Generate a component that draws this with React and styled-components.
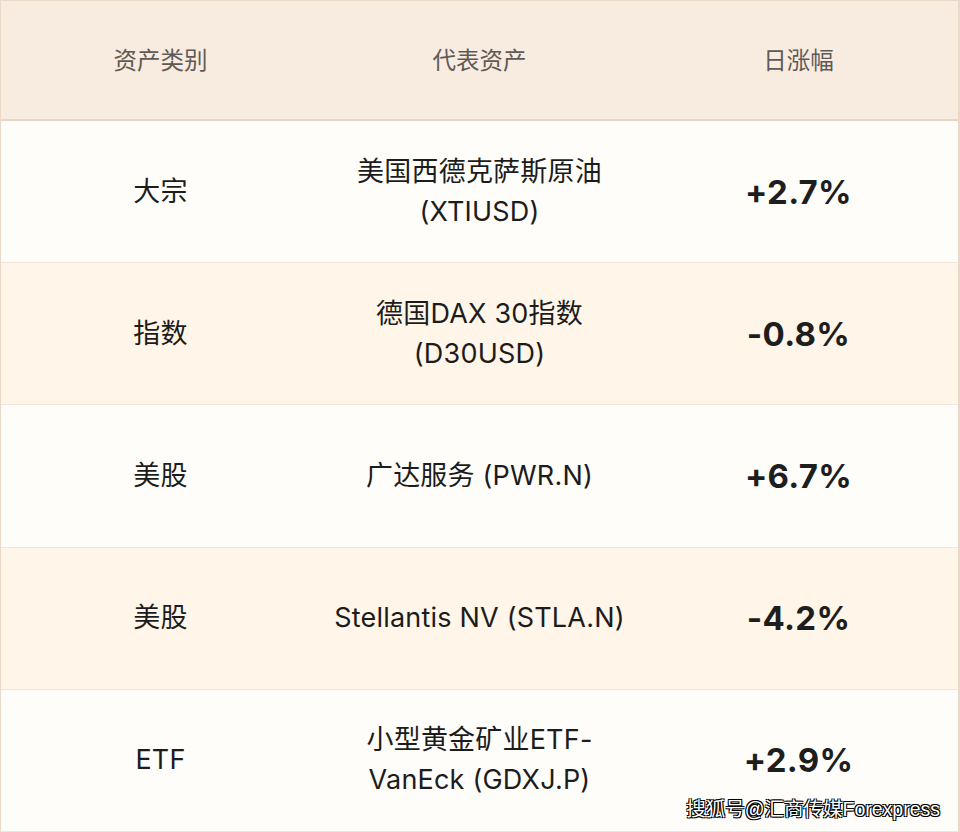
import React from "react";
import styled, { createGlobalStyle } from "styled-components";

const GlobalStyle = createGlobalStyle`
  html, body {
    margin: 0;
    padding: 0;
    background: #fffdfa;
  }
  body {
    font-family: "Inter", "Noto Sans CJK SC", sans-serif;
  }
`;

const Table = styled.div`
  position: relative;
  width: 960px;
  height: 832px;
  box-sizing: border-box;
  display: grid;
  grid-template-rows: 120px repeat(5, 1fr);
  border-left: 1px solid #ead9c8;
  border-right: 2px solid #ead9c8;
  border-top: 1px solid #ead9c8;
  overflow: hidden;
`;

const HeaderRow = styled.div`
  display: grid;
  grid-template-columns: repeat(3, 1fr);
  align-items: center;
  background: #f8ebdf;
  border-bottom: 2px solid #e8d5c3;
`;

const HeaderCell = styled.div`
  text-align: center;
  font-size: 23.5px;
  color: #5f5a57;
  padding-bottom: 2px;
`;

const Row = styled.div`
  display: grid;
  grid-template-columns: repeat(3, 1fr);
  align-items: center;
  background: ${(p) => (p.$alt ? "#fff5e9" : "#fffdfa")};
  border-bottom: 1px solid #f3e6d9;
`;

const Cell = styled.div`
  text-align: center;
  font-size: 27px;
  line-height: 40px;
  color: #1c1c1c;
  letter-spacing: 0.2px;
`;

const Change = styled.div`
  text-align: center;
  font-size: 33px;
  font-weight: 700;
  color: #1e1e1e;
  letter-spacing: 0.3px;
`;

const Watermark = styled.div`
  position: absolute;
  right: 18px;
  bottom: 10px;
  font-family: "Liberation Sans", "Noto Sans CJK SC", sans-serif;
  font-size: 19.5px;
  color: #fff;
  text-shadow: -1px -1px 0 #000, 1px -1px 0 #000, -1px 1px 0 #000,
    1px 1px 0 #000;
`;

const rows = [
  { type: "大宗", asset: ["美国西德克萨斯原油", "(XTIUSD)"], change: "+2.7%" },
  { type: "指数", asset: ["德国DAX 30指数", "(D30USD)"], change: "-0.8%" },
  { type: "美股", asset: ["广达服务 (PWR.N)"], change: "+6.7%" },
  { type: "美股", asset: ["Stellantis NV (STLA.N)"], change: "-4.2%" },
  { type: "ETF", asset: ["小型黄金矿业ETF-", "VanEck (GDXJ.P)"], change: "+2.9%" },
];

const App = () => {
  return (
    <>
      <GlobalStyle />
      <Table>
        <HeaderRow>
          <HeaderCell>资产类别</HeaderCell>
          <HeaderCell>代表资产</HeaderCell>
          <HeaderCell>日涨幅</HeaderCell>
        </HeaderRow>
        {rows.map((r, i) => (
          <Row key={i} $alt={i % 2 === 1}>
            <Cell>{r.type}</Cell>
            <Cell>
              {r.asset.map((line) => (
                <div key={line}>{line}</div>
              ))}
            </Cell>
            <Change>{r.change}</Change>
          </Row>
        ))}
        <Watermark>搜狐号@汇商传媒Forexpress</Watermark>
      </Table>
    </>
  );
};

export default App;
